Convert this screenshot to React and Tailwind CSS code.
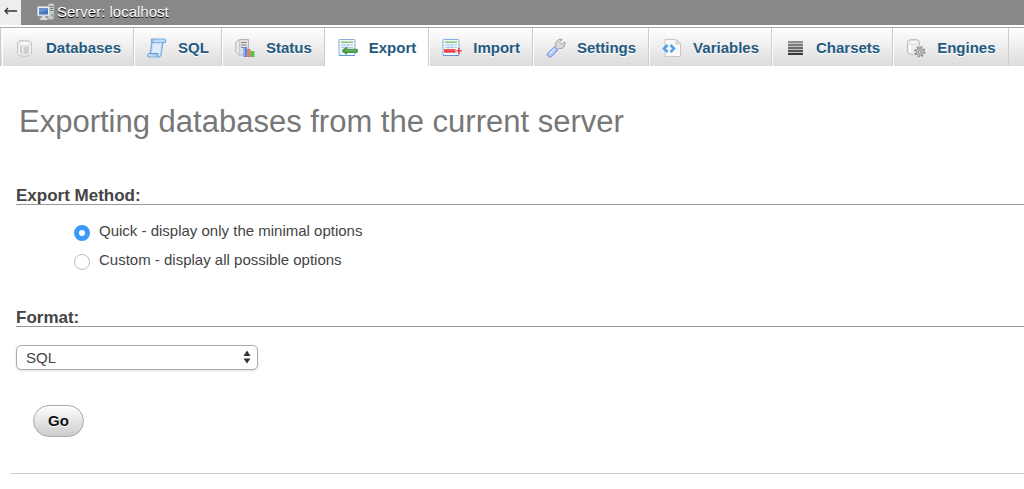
import React, { useState } from 'react';

const ServerIcon = () => (
    <svg viewBox="0 0 18 18" className="w-[18px] h-[18px] shrink-0" aria-hidden="true">
        <path d="M11 1.5 L13 .5 H17 V15 L15 16.5 H11 Z" fill="#c9ccc9" stroke="#a2a6a2" strokeWidth=".7" />
        <path d="M12.5 3.5 H16 M12.5 5.5 H16 M12.5 7.5 H16" stroke="#6f7570" strokeWidth=".9" />
        <rect x="14.4" y="11" width="1.6" height="2.6" fill="#68b34c" />
        <rect x=".5" y="3.5" width="12" height="9.5" rx="1" fill="#e9eef3" stroke="#bcc5cf" strokeWidth=".8" />
        <rect x="2" y="5" width="9" height="6.5" fill="#4573b8" />
        <path d="M2 5 H11 V7 L2 10 Z" fill="#648fd0" />
        <path d="M5 13 H8.500 V15 H10.500 V17 H3 V15 H5 Z" fill="#dfe3e7" stroke="#aab0b6" strokeWidth=".5" />
    </svg>
);

const DatabaseIcon = () => (
    <svg viewBox="0 0 20 20" className="w-5 h-5 shrink-0" aria-hidden="true">
        <path d="M2.500 5 C2.500 1.300 16.500 1.300 16.500 5 V15 C16.500 19.300 2.500 19.300 2.500 15 Z" fill="#f1f1f1" stroke="#c2c2c2" />
        <path d="M5 8 V15.300 C7 17 12 17 14 15.300 V8 C12 9 7 9 5 8 Z" fill="#cfcfcf" />
        <path d="M7 9 V16 H9 V9 Z" fill="#e6e6e6" />
        <ellipse cx="9.500" cy="5.500" rx="4.800" ry="1.900" fill="#fff" stroke="#d2d2d2" strokeWidth=".8" />
    </svg>
);

const SqlIcon = () => (
    <svg viewBox="0 0 20 20" className="w-5 h-5 shrink-0" aria-hidden="true">
        <path d="M5 1 H17 C19 1 19.300 4.500 17.500 4.700 H15.800 L14 17 C13.700 18.600 12.700 19 11.500 19 H2 C.3 19 .3 15.700 2 15.500 H3.300 L4.800 4 C4.300 3 4 1.600 5 1 Z" fill="#c3ddf6" stroke="#78a9db" strokeWidth="1.200" />
        <path d="M6.500 4.800 H14.500 L13 15.500 H5 Z" fill="#deedfc" />
        <path d="M5 1.200 C6.800 1.600 6.800 4.500 5.200 4.700 H15.800" fill="none" stroke="#78a9db" />
        <path d="M2 15.500 H10.700 C10 17 10.500 19 12 19" fill="#a7cbef" stroke="#5f97d2" />
    </svg>
);

const StatusIcon = () => (
    <svg viewBox="0 0 20 20" className="w-5 h-5 shrink-0" aria-hidden="true">
        <path d="M1 4 L4.500 1.500 H13.500 V17 H4.500 L1 14 Z" fill="#dedede" stroke="#b3b3b3" />
        <path d="M1 4 L4.500 1.500 V17 L1 14 Z" fill="#e9e9e9" stroke="#b9b9b9" strokeWidth=".7" />
        <path d="M6 4.500 H11.500 M6 7 H11.500 M6 9.500 H11.500" stroke="#8b8b8b" />
        <rect x="8.500" y="9" width="3.500" height="10" fill="#4d8df0" />
        <rect x="12" y="11" width="3.500" height="8" fill="#ee6b45" />
        <rect x="15.500" y="13" width="4" height="6" fill="#54c24f" />
        <path d="M9.500 9.500 V18.500 M13 11.500 V18.500" stroke="#fff" strokeOpacity=".4" strokeWidth=".8" />
    </svg>
);

const SheetBase = () => (
    <>
        <rect x="1" y="1.500" width="16" height="16" rx="1" fill="#f3f8fe" stroke="#84aee0" />
        <path d="M3 4.200 H15" stroke="#8ccb6c" strokeWidth="1.600" />
        <path d="M3 7 H15 M3 9.500 H15 M3 14.500 H15 M6 6 V15 M10 6 V15" stroke="#a9c7eb" strokeWidth=".9" />
        <path d="M1 17.500 H17" stroke="#5f94d6" />
    </>
);

const ExportIcon = () => (
    <svg viewBox="0 0 20 20" className="w-5 h-5 shrink-0" aria-hidden="true">
        <SheetBase />
        <path d="M4 12.700 L8.500 9 V11.200 H19.300 V14.500 H8.500 V16.500 Z" fill="#459b3e" stroke="#2f7e30" strokeWidth=".6" />
        <path d="M7 12.700 H18" stroke="#7cc46c" strokeWidth=".8" />
    </svg>
);

const ImportIcon = () => (
    <svg viewBox="0 0 20 20" className="w-5 h-5 shrink-0" aria-hidden="true">
        <SheetBase />
        <path d="M2 11 H13.500 V14.500 H2 Z" fill="#ee3434" />
        <path d="M2 12 H13" stroke="#ff8a8a" strokeWidth=".8" />
        <path d="M14.500 12.800 H19.800 M16.800 9.800 V16" stroke="#f04343" strokeWidth="1.600" />
    </svg>
);

const SettingsIcon = () => (
    <svg viewBox="0 0 20 20" className="w-5 h-5 shrink-0" aria-hidden="true">
        <path d="M10 9 C8.500 5 11 1 15.500 1.200 L16.300 1.600 L13.600 4.400 L15.500 6.500 L18.700 4 C20 8 16.500 11.400 12.500 10.400 L11 12 L8.500 9.800 Z" fill="#dadada" stroke="#9c9c9c" />
        <path d="M8.500 8.800 L12 12 L5.800 18.500 C3.500 20.200 .2 17.500 1.800 15 Z" fill="#abc5f2" stroke="#6d94db" />
        <path d="M8.500 10.800 L3.500 16" stroke="#dce8fc" strokeWidth="1.500" />
    </svg>
);

const VariablesIcon = () => (
    <svg viewBox="0 0 20 20" className="w-5 h-5 shrink-0" aria-hidden="true">
        <path d="M3 1.500 H14 L18.500 6 V18.500 H3 Z" fill="#f8f8f8" stroke="#c8c8c8" />
        <path d="M14 1.500 V6 H18.500 Z" fill="#ddd" stroke="#c4c4c4" strokeWidth=".7" />
        <path d="M5.500 7 L2 10.500 L5.500 14 M8.500 7 L12 10.500 L8.500 14" fill="none" stroke="#4fa0f3" strokeWidth="2.500" />
    </svg>
);

const CharsetsIcon = () => (
    <svg viewBox="0 0 20 20" className="w-5 h-5 shrink-0" aria-hidden="true">
        <rect x="3" y="3" width="15" height="14" fill="#c4c4c4" />
        <rect x="3" y="3" width="15" height="2" fill="#8f8f8f" />
        <rect x="3" y="6" width="15" height="2" fill="#7d7d7d" />
        <rect x="3" y="9" width="15" height="2" fill="#6a6a6a" />
        <rect x="3" y="12" width="15" height="2" fill="#555" />
        <rect x="3" y="15" width="15" height="2" fill="#3a3a3a" />
    </svg>
);

const EnginesIcon = () => (
    <svg viewBox="0 0 20 20" className="w-5 h-5 shrink-0" aria-hidden="true">
        <path d="M1.500 4 C1.500 .5 13.500 .5 13.500 4 V14 C13.500 17.500 1.500 17.500 1.500 14 Z" fill="#ececec" stroke="#bdbdbd" />
        <ellipse cx="7.500" cy="4.300" rx="4.300" ry="1.600" fill="#fff" stroke="#cfcfcf" strokeWidth=".7" />
        <path d="M4 7.500 V14" stroke="#fff" strokeWidth="2" />
        <circle cx="13.800" cy="13.700" r="4.800" fill="none" stroke="#8f8f8f" strokeWidth="1.800" strokeDasharray="2 1.770" />
        <circle cx="13.800" cy="13.700" r="3.600" fill="#d2d2d2" stroke="#8f8f8f" />
        <circle cx="13.800" cy="13.700" r="1.500" fill="#fff" stroke="#6f6f6f" />
    </svg>
);

const tabs = [
    { name: 'Databases', Icon: DatabaseIcon },
    { name: 'SQL', Icon: SqlIcon },
    { name: 'Status', Icon: StatusIcon },
    { name: 'Export', Icon: ExportIcon },
    { name: 'Import', Icon: ImportIcon },
    { name: 'Settings', Icon: SettingsIcon },
    { name: 'Variables', Icon: VariablesIcon },
    { name: 'Charsets', Icon: CharsetsIcon },
    { name: 'Engines', Icon: EnginesIcon },
];

const methods = [
    { value: 'quick', label: 'Quick - display only the minimal options' },
    { value: 'custom', label: 'Custom - display all possible options' },
];

const App = () => {
    const [method, setMethod] = useState('quick');
    const [format, setFormat] = useState('sql');

    return (
        <div className="min-h-screen overflow-x-hidden bg-white text-[#444] text-[15px] leading-5 font-['Liberation_Sans',Arial,sans-serif]">
            {/* Server bar */}
            <header className="flex h-[25px] bg-[#888]">
                <button type="button" aria-label="Hide panel" className="w-[21px] pb-1 bg-[#eee] flex items-center justify-center">
                    <svg viewBox="0 0 14 10" className="w-3.5 h-2.5" aria-hidden="true">
                        <path d="M1 5 H13 M4 2 L1 5 L4 8" fill="none" stroke="#333" strokeWidth="1.300" />
                    </svg>
                </button>
                <a href="#server" className="flex items-center gap-0.5 pl-4 pb-0.5 text-white [text-shadow:0_1px_0_#000]">
                    <ServerIcon />
                    Server: localhost
                </a>
            </header>

            {/* Top menu */}
            <nav className="mt-0.5 border-t border-[#aaa] bg-linear-to-b from-white to-[#dcdcdc]">
                <ul className="flex pl-px border-l border-[#ccc]">
                    {tabs.map(({ name, Icon }) => (
                        <li key={name} className="border-r border-[#ccc]">
                            <a
                                href={`#${name.toLowerCase()}`}
                                className={`flex items-center gap-[11px] h-[38px] pt-px pl-3 pr-3 border-l border-white font-bold text-[#235a81] [text-shadow:0_1px_0_#fff] ${name === 'Export' ? 'bg-white' : ''}`}
                            >
                                <Icon />
                                {name}
                            </a>
                        </li>
                    ))}
                </ul>
            </nav>

            <main className="pl-4">
                <h1 className="pl-[3px] pt-9 text-[31px] leading-10 text-[#777]">Exporting databases from the current server</h1>

                <form onSubmit={(e) => e.preventDefault()}>
                    <fieldset className="mt-[46px]">
                        <legend className="w-full border-b border-[#999] text-[17px] leading-4 font-bold">Export Method:</legend>
                        <ul className="mt-4 pl-[58px] flex flex-col gap-[9px]">
                            {methods.map((item) => (
                                <li key={item.value}>
                                    <label className="flex items-start gap-[9px]">
                                        <input
                                            type="radio"
                                            name="method"
                                            value={item.value}
                                            checked={method === item.value}
                                            onChange={() => setMethod(item.value)}
                                            className="appearance-none mt-1 w-4 h-4 rounded-full border border-[#bbb] bg-white checked:border-[5px] checked:border-[#3b99fc]"
                                        />
                                        {item.label}
                                    </label>
                                </li>
                            ))}
                        </ul>
                    </fieldset>

                    <section className="mt-10">
                        <h2 className="border-b border-[#999] text-[17px] leading-4 font-bold">
                            <label htmlFor="format">Format:</label>
                        </h2>
                        <div className="relative mt-[18px] w-[242px]">
                            <select
                                id="format"
                                value={format}
                                onChange={(e) => setFormat(e.target.value)}
                                className="appearance-none block w-full h-[25px] pl-[9px] rounded-[5px] border border-[#aaa] bg-white shadow-sm"
                            >
                                <option value="sql">SQL</option>
                            </select>
                            <svg viewBox="0 0 8 14" className="absolute right-[7px] top-[5px] w-2 h-3.5 pointer-events-none" aria-hidden="true">
                                <path d="M4 .5 L7.500 6 H.5 Z M4 13.500 L.5 8.500 H7.500 Z" fill="#333" />
                            </svg>
                        </div>
                    </section>

                    <button type="submit" className="mt-[35px] ml-[17px] h-8 px-3.5 rounded-2xl border border-[#aaa] bg-linear-to-b from-white to-[#ccc] font-bold text-[#111] [text-shadow:0_1px_0_#fff]">
                        Go
                    </button>
                </form>
            </main>

            <hr className="mt-9 ml-2.5 border-[#ccc]" />
        </div>
    );
};

export default App;
